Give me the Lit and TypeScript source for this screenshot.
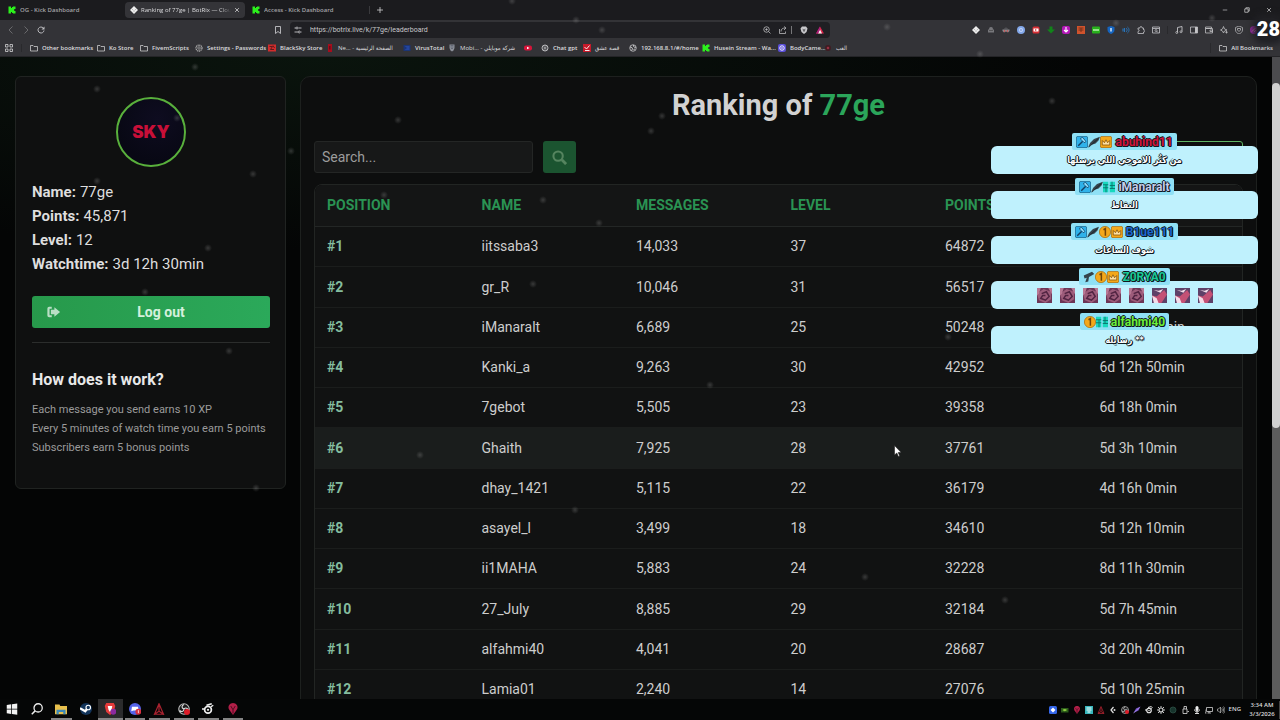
import { LitElement, html, css, svg, nothing, TemplateResult } from "lit";
import { customElement, property } from "lit/decorators.js";
import { classMap } from "lit/directives/class-map.js";

const glyphs: Record<string, TemplateResult> = {
  kick: svg`<path fill="#2cf01c" d="M1 1h5v3h2V2h2V1h5v5h-2v1h-1v2h1v1h2v5h-5v-1H8v-2H6v3H1z"/>`,
  botrix: svg`<path fill="#eee" d="M8 0l4 4 4 4-4 4-4 4-4-4-4-4 4-4z"/><path d="M5 6v2M11 6v2M6 10h4" stroke="#888" fill="none"/>`,
  close: svg`<path d="M3 3l10 10M13 3L3 13" stroke="currentColor" stroke-width="2" fill="none"/>`,
  plus: svg`<path d="M8 2v12M2 8h12" stroke="currentColor" stroke-width="1.5" fill="none"/>`,
  min: svg`<path d="M2 8h12" stroke="currentColor" stroke-width="1.6" fill="none"/>`,
  restore: svg`<path d="M2 5h9v9H2zM5 5V2h9v9h-3" stroke="currentColor" stroke-width="1.8" fill="none"/>`,
  back: svg`<path d="M11 1L4 8l7 7" stroke="#77777a" stroke-width="1.6" fill="none"/>`,
  fwd: svg`<path d="M5 1l7 7-7 7" stroke="#77777a" stroke-width="1.6" fill="none"/>`,
  reload: svg`<path d="M14 9a6 6 0 1 1-1.500-5" stroke="currentColor" stroke-width="1.900" fill="none"/><path d="M15 1v6H9z" fill="currentColor"/>`,
  mark: svg`<path d="M3 1h10v14l-5-4-5 4z" stroke="currentColor" stroke-width="1.800" fill="none"/>`,
  tune: svg`<path d="M1 4h3M9 4h6M1 12h7M13 12h2" stroke="currentColor" stroke-width="1.800"/><circle cx="6" cy="4" r="2" stroke="currentColor" stroke-width="1.600" fill="none"/><circle cx="10.500" cy="12" r="2" stroke="currentColor" stroke-width="1.600" fill="none"/>`,
  zoom: svg`<circle cx="7" cy="7" r="5.500" stroke="currentColor" stroke-width="1.500" fill="none"/><path d="M11 11l4 4M4.500 7h5M7 4.500v5" stroke="currentColor" stroke-width="1.500"/>`,
  share: svg`<path d="M1 6v9h12v-4M4 11c0-5 3-7 9-7M10 1l4 3-4 4" stroke="currentColor" stroke-width="1.500" fill="none"/>`,
  brave: svg`<path d="M4 1h8l3 4-2 7-5 4-5-4-2-7z" fill="#c9c9cc"/><path d="M5 5l3 2 3-2-1 5-2 2-2-2z" fill="#66666a"/>`,
  bat: svg`<path d="M8 1l8 14H0z" fill="#d8224a"/><path d="M8 7l4 8H4z" fill="#f5f5f5"/><path d="M0 15L8 1v6l-4 8z" fill="#a82080"/>`,
  apps: svg`<path d="M1 1h5v5H1zM10 1h5v5h-5zM1 10h5v5H1zM10 10h5v5h-5z" stroke="currentColor" stroke-width="1.500" fill="none"/>`,
  folder: svg`<path d="M1 3h5l2 2h7v9H1z" stroke="currentColor" stroke-width="1.400" fill="none"/>`,
  gear: svg`<circle cx="8" cy="8" r="6" stroke="#aaa" stroke-width="2.500" stroke-dasharray="2.500 1" fill="none"/><circle cx="8" cy="8" r="2.500" stroke="#aaa" stroke-width="1.500" fill="none"/>`,
  blacksky: svg`<path d="M0 1h16v14H0z" fill="#d22c2c"/><path d="M3 5h6L5 11h7M10 3l3 5" stroke="#3a1416" stroke-width="1.500" fill="none"/>`,
  redbox: svg`<path d="M4 0h8v16H4z" fill="#a50d1c"/><path d="M6 4h3v7H6z" fill="#700814"/>`,
  vt: svg`<path d="M1 2h14v12H1z" fill="#1b3576"/><path d="M3 4l5 4-5 4h10V4z" fill="#24459c"/>`,
  crest: svg`<path d="M3 1h10v7l-2 5-3 2-3-2-2-5z" fill="#8c9099"/><path d="M5 3h6M5 6h6M6 9h4" stroke="#3d4350"/>`,
  yt: svg`<rect x="0" y="3" width="16" height="10" rx="4" fill="#d8143a"/><path d="M6 5.500v5l5-2.500z" fill="#fff"/>`,
  gpt: svg`<circle cx="8" cy="8" r="6" stroke="#b9b9bc" stroke-width="2" fill="none"/><path d="M4 5l8 6M12 5l-8 6M8 2v12" stroke="#b9b9bc" stroke-width="1.200"/>`,
  check: svg`<path d="M0 0h16v16H0z" fill="#c61a2a"/><path d="M3 6l4 4 6-7M4 13h9" stroke="#fff" stroke-width="1.800" fill="none"/>`,
  globe: svg`<circle cx="8" cy="8" r="6.500" stroke="#c9c9cc" stroke-width="1.600" fill="none"/><path d="M2 6l4 1 1 3-2 3M9 2v3l3 2 2-1M9 11l3-1" stroke="#c9c9cc" stroke-width="1.800" fill="none"/>`,
  body: svg`<rect width="16" height="16" rx="4" fill="#5a4fd8"/><circle cx="8" cy="8" r="4.500" stroke="#fff" stroke-width="1.800" fill="none"/><circle cx="8" cy="8" r="1.500" fill="#fff"/>`,
  dark: svg`<circle cx="8" cy="8" r="6" fill="#3f1c22"/><path d="M5 8l3-3 3 3-3 3z" fill="#a33346"/>`,
  robot: svg`<path d="M2 7h12v6H2zM7 3h2v4H7z" fill="#77777b"/><circle cx="8" cy="6" r="4" fill="#77777b"/><path d="M5 9h2M9 9h2" stroke="#333" stroke-width="2"/>`,
  mask: svg`<path d="M1 7h14v3l-3 3-4-2-4 2-3-3z" fill="#8b8b8f"/><path d="M4 6c1-4 7-4 8 0z" fill="#505055"/><circle cx="5" cy="10" r="1.500" fill="#d44"/><circle cx="11" cy="10" r="1.500" fill="#d44"/>`,
  disc: svg`<circle cx="8" cy="8" r="8" fill="#83a8ea"/><circle cx="8" cy="8" r="4" fill="#c3d6fa"/><circle cx="8" cy="8" r="1.500" fill="#5675c0"/>`,
  redsq: svg`<rect x="1" y="1" width="14" height="14" rx="3" fill="#d82e34"/><path d="M3 5h10v6H3z" fill="#fff"/><path d="M6 6v4l4-2z" fill="#d82e34"/>`,
  down: svg`<path d="M5 1h6v6h5l-8 8-8-8h5z" fill="#12831a"/>`,
  purple: svg`<rect width="16" height="16" rx="4" fill="#b418b8"/><path d="M8 2v10M4 8l4 4 4-4" stroke="#fff" stroke-width="2.200" fill="none"/>`,
  orange: svg`<path d="M0 0h16v16H0z" fill="#d0532c"/><path d="M3 4h10M3 8h10M8 4v8" stroke="#6e2c1a" stroke-width="1.800"/>`,
  green: svg`<rect y="1" width="16" height="14" rx="2" fill="#28b01c"/><path d="M2 8h12M4 6v4M8 6v4M12 6v4" stroke="#d9ffd0" stroke-width="1.500"/>`,
  shieldb: svg`<path d="M8 0l7 2v6c0 4-4 7-7 8-3-1-7-4-7-8V2z" fill="#1565c0"/><path d="M8 4v7" stroke="#fff" stroke-width="2.500"/>`,
  sound: svg`<path d="M2 5v6M5 4v8" stroke="#2873b8" stroke-width="2.200"/><path d="M8 4c3 2 3 6 0 8M11 2c4 3 4 9 0 12" stroke="#2873b8" stroke-width="1.800" fill="none"/>`,
  puzzle: svg`<path d="M2 4h4c-1-4 5-4 4 0h3v4c4-1 4 4 0 4v3H2v-4c3 0 3-4 0-4z" stroke="currentColor" stroke-width="1.600" fill="none"/>`,
  inspect: svg`<path d="M1 2h14v12H1zM1 5h14" stroke="currentColor" stroke-width="1.600" fill="none"/><circle cx="8" cy="9" r="2" stroke="currentColor" stroke-width="1.400" fill="none"/><path d="M9 10l3 3" stroke="currentColor" stroke-width="1.400"/>`,
  music: svg`<path d="M5 13V3l9-2v10" stroke="currentColor" stroke-width="1.800" fill="none"/><circle cx="3.500" cy="13" r="2" stroke="currentColor" stroke-width="1.500" fill="none"/><circle cx="12" cy="11.500" r="2" stroke="currentColor" stroke-width="1.500" fill="none"/>`,
  panel: svg`<path d="M1 2h14v12H1z" stroke="currentColor" stroke-width="1.600" fill="none"/><path d="M10 2h5v12h-5z" fill="currentColor"/>`,
  wallet: svg`<path d="M1 2h12v3H1zM1 5h14v9H1zM10 8h5v3h-5z" stroke="currentColor" stroke-width="1.500" fill="none"/>`,
  spark: svg`<path d="M7 1l2 5 5 2-5 2-2 4-2-4-4-2 4-2z" stroke="currentColor" stroke-width="1.500" fill="none"/><path d="M13 10v5M10.500 12.500h5" stroke="currentColor" stroke-width="1.500"/>`,
  shield: svg`<path d="M8 0l7 3v5c0 4-4 7-7 8-3-1-7-4-7-8V3z" stroke="currentColor" stroke-width="1.400" fill="none"/><path d="M5 5h6v3l-3 3-3-3z" stroke="currentColor" stroke-width="1.500" fill="none"/>`,
  profile: svg`<circle cx="8" cy="8" r="8" fill="#9a2aa8"/><path d="M4 11l7-7M8 12l4-4" stroke="#f090c8" stroke-width="2"/>`,
  exit: svg`<path d="M6 2H3a2 2 0 0 0-2 2v8a2 2 0 0 0 2 2h3v-2.200H3.500V4.200H6z" fill="currentColor"/><path d="M9 2.500l6.500 5.500L9 13.500V10.500H5v-5h4z" fill="currentColor"/>`,
  search: svg`<circle cx="6.500" cy="6.500" r="5" stroke="currentColor" stroke-width="2.200" fill="none"/><path d="M10.500 10.500l4.500 4.500" stroke="currentColor" stroke-width="3"/>`,
  hammer: svg`<rect x=".5" y=".5" width="15" height="15" rx="2" fill="#2fb2ea" stroke="#145e86"/><path d="M3 13l6-6" stroke="#123f63" stroke-width="2"/><path d="M6 3l3-1 4 5-1 2-2-1-4-4z" fill="#8fe0ff" stroke="#123f63"/>`,
  feather: svg`<path d="M0 15l3-6 5-5 8-3-2 5-4 4-6 2z" fill="#35434b"/><path d="M1 15L14 3" stroke="#11191d" fill="none"/>`,
  crown: svg`<rect x=".5" y=".5" width="15" height="15" rx="2" fill="#f4a81a" stroke="#ad6a08"/><path d="M3 12V6l3 3 2-4 2 4 3-3v6z" fill="#ffe0a0" stroke="#7d4d0a"/>`,
  gifts: svg`<path d="M0 1h7v14H0zM9 1h7v14H9z" fill="#18d8be"/><path d="M4 5v10M0 5h7M0 9h7M12 1v9M9 6h7M9 10h7" stroke="#08756b" stroke-width="1.200"/>`,
  coin: svg`<circle cx="8" cy="8" r="7.500" fill="#f3a81b" stroke="#b06d08"/><path d="M6 5l2.500-1.500V13" stroke="#704408" stroke-width="2" fill="none"/>`,
  gun: svg`<path d="M1 6l11-5 3 3-7 4-1 6-4 1 2-6-3 1z" fill="#34434b"/>`,
  win: svg`<path d="M1 2.500l6-.8v6H1zM8 1.600l7-1v7.100H8zM1 8.500h6v6l-6-.8zM8 8.500h7v7l-7-1z" fill="#f2f2f2"/>`,
  find: svg`<circle cx="9.500" cy="6.500" r="5.500" stroke="#eee" stroke-width="1.700" fill="none"/><path d="M5.500 10.500L1 15" stroke="#eee" stroke-width="1.900"/>`,
  files: svg`<path d="M0 2h6l1 2h9v11H0z" fill="#e8c04c"/><path d="M2 9h12v6h-3v-3H5v3H2z" fill="#3b88b8"/>`,
  steam: svg`<circle cx="8" cy="8" r="8" fill="#12345a"/><path d="M0 7l7 4 4-5" stroke="#fff" stroke-width="3" fill="none"/><circle cx="11" cy="6" r="3" stroke="#fff" stroke-width="1.500" fill="#12345a"/>`,
  bravec: svg`<path d="M3 0h10l2 4-2 8-5 4-5-4-2-8z" fill="#e53b3b"/><path d="M5 4h6l-1 5-2 3-2-3z" fill="#fff"/><circle cx="12.500" cy="11.500" r="4" fill="#8c2aa0"/>`,
  discord: svg`<circle cx="8" cy="8" r="8" fill="#5563e8"/><path d="M4 5h8l1 6-3-1H6l-3 1z" fill="#fff"/><circle cx="12.500" cy="11.500" r="4" fill="#d83040"/><path d="M12.500 9.500v4" stroke="#fff"/>`,
  tri: svg`<path d="M8 1l6 14-6-4-6 4zM8 3v8M2 15h12" stroke="#a8222f" stroke-width="1.600" fill="none"/>`,
  obs: svg`<circle cx="8" cy="8" r="7" stroke="#bbb" stroke-width="1.500" fill="#1b1b1b"/><path d="M8 8c-4-1-3-5 0-6M8 8c3-3 6 0 6 3M8 8c0 4-4 4-6 2" stroke="#ddd" stroke-width="1.500" fill="none"/><circle cx="12" cy="12" r="4" fill="#dd1c28"/>`,
  series: svg`<circle cx="8" cy="9" r="4.500" stroke="#eee" stroke-width="2.300" fill="none"/><circle cx="8" cy="9" r="1.500" fill="#eee"/><path d="M0 8h4M6 3l7-2M12 5l3-2" stroke="#eee" stroke-width="2"/>`,
  pin: svg`<path d="M8 16L3 9C0 4 4 0 8 0s8 4 5 9z" fill="#b21f48"/><path d="M5 4l3 5 3-5M8 9v5" stroke="#4d0b20" stroke-width="1.300" fill="none"/>`,
  bluesq: svg`<rect width="16" height="16" rx="3" fill="#3566e8"/><path d="M8 3l5 5-5 5-5-5z" fill="#fff"/>`,
  nvidia: svg`<path d="M0 4h15v9H0z" fill="#2b5b1a"/><path d="M3 8c2-3 7-3 9 0-2 3-7 3-9 0z" fill="#8ecb40"/>`,
  teal: svg`<path d="M0 0h16v16H0z" fill="#38b8bd"/><path d="M3 4h10M3 8h10M5 12h6" stroke="#fff" stroke-width="2"/>`,
  quill: svg`<path d="M1 14L6 5l9-4-4 8z" fill="#7955c8"/><path d="M1 14L13 3" stroke="#c7b5ff"/>`,
  dots: svg`<path d="M9 2L4 8l5 6" stroke="#ddd" stroke-width="2.500" fill="none"/><circle cx="11" cy="8" r="2" fill="#ddd"/>`,
  dim: svg`<circle cx="8" cy="8" r="6" fill="#17342c" stroke="#28483e" stroke-width="2"/>`,
  cog: svg`<circle cx="8" cy="8" r="4" stroke="#ddd" stroke-width="2.200" fill="none"/><path d="M8 0v3M8 13v3M0 8h3M13 8h3M2 2l2.500 2.500M11.500 11.500L14 14M14 2l-2.500 2.500M4.500 11.500L2 14" stroke="#ddd" stroke-width="1.800"/>`,
  usb: svg`<path d="M4 6h8v9H4zM6 6V1h5v5M13 11h3" stroke="#ddd" stroke-width="1.600" fill="none"/>`,
  mic: svg`<rect x="5" y="0" width="6" height="10" rx="3" fill="#eee"/><path d="M3 7c0 6 10 6 10 0M8 11v4M4 15h8" stroke="#eee" stroke-width="1.800" fill="none"/>`,
  net: svg`<path d="M3 3h12v8H3zM8 11v3M5 14h7M0 7v7h3" stroke="#ddd" stroke-width="1.500" fill="none"/>`,
  vol: svg`<path d="M1 6h2l4-4v12l-4-4H1z" stroke="#ccc" stroke-width="1.300" fill="none"/><path d="M9 5c2 2 2 4 0 6M11 3c3 3 3 7 0 10M13 1c4 4 4 10 0 14" stroke="#ccc" stroke-width="1.200" fill="none"/>`,
  rose: svg`<path fill="#6d3656" d="M0 0h16v16H0z"/><path d="M0 6l7-5 8 3v8l-6 4-7-3z" fill="#9d5c7a"/><path d="M0 0h4l-2 6-2 2zM12 0h4v7z" fill="#b87894"/><path d="M5 6l5-2 3 5-4 4-5-2 2-3h3" fill="none" stroke="#512442" stroke-width="1.600"/>`,
  rose2: svg`<path fill="#5e4168" d="M0 0h16v16H0z"/><path d="M0 8l5 1 8-7 3 5-6 9H3z" fill="#c45175"/><path d="M0 8l5 3 2 5H2zM2 2l5 1 5-2-3 4z" fill="#f4dce8"/>`,
};

const icon = (name: string) =>
  html`<svg class="i" viewBox="0 0 16 16" aria-hidden="true">${glyphs[name]}</svg>`;

const bookmarks: [string, string][] = [
  ["folder", "Other bookmarks"], ["folder", "Ko Store"], ["folder", "FivemScripts"],
  ["gear", "Settings - Passwords"], ["blacksky", "BlackSky Store"],
  ["redbox", "Ne... - الصفحة الرئيسية"], ["vt", "VirusTotal"],
  ["crest", "Mobi... - شركة موبايلي"], ["yt", ""], ["gpt", "Chat gpt"],
  ["check", "قصة عشق"], ["globe", "192.168.8.1/#/home"],
  ["kick", "Husein Stream - Wa..."], ["body", "BodyCame..."], ["dark", "العب"],
];
const extensions = ["botrix", "robot", "mask", "disc", "redsq", "down", "purple", "orange", "green", "shieldb", "sound", "puzzle", "inspect"];
const tools = ["music", "panel", "wallet", "spark", "shield", "profile"];

const rows = [
  ["iitssaba3", "14,033", "37", "64872", "9d 4h 25min"],
  ["gr_R", "10,046", "31", "56517", "8d 6h 5min"],
  ["iManaralt", "6,689", "25", "50248", "7d 12h 10min"],
  ["Kanki_a", "9,263", "30", "42952", "6d 12h 50min"],
  ["7gebot", "5,505", "23", "39358", "6d 18h 0min"],
  ["Ghaith", "7,925", "28", "37761", "5d 3h 10min"],
  ["dhay_1421", "5,115", "22", "36179", "4d 16h 0min"],
  ["asayel_l", "3,499", "18", "34610", "5d 12h 10min"],
  ["ii1MAHA", "5,883", "24", "32228", "8d 11h 30min"],
  ["27_July", "8,885", "29", "32184", "5d 7h 45min"],
  ["alfahmi40", "4,041", "20", "28687", "3d 20h 40min"],
  ["Lamia01", "2,240", "14", "27076", "5d 10h 25min"],
];

const flakes = [
  [97, 89], [195, 67], [291, 151], [253, 174], [97, 181], [177, 118], [208, 248], [145, 292], [229, 351],
  [398, 120], [662, 116], [651, 131], [543, 200], [599, 223], [384, 195], [533, 284], [1052, 101],
  [512, 1], [576, 20], [602, 30], [887, 27], [980, 54], [1116, 23], [1212, 18], [575, 510],
  [948, 337], [865, 577], [1005, 600], [420, 455], [710, 385], [256, 488],
];

const base = css`
  * { box-sizing: border-box; }
  .i { width: 8px; height: 8px; flex: none; display: block; }
  button { font: inherit; color: inherit; background: none; border: 0; padding: 0; }
  a { color: inherit; text-decoration: none; }
`;

@customElement("browser-chrome")
class BrowserChrome extends LitElement {
  static styles = [base, css`
    :host { display: block; position: relative; flex: none; color: #dcdcde; font: 600 6px/10px "Open Sans", "DejaVu Sans Condensed", "DejaVu Sans", sans-serif; }
    .tabs { height: 20px; background: #1b1b1e; display: flex; align-items: center; gap: 2px; padding-left: 3px; }
    .tab { width: 120px; height: 16px; display: flex; align-items: center; gap: 4px; padding: 0 5px; border-radius: 4px; color: #a3a3a6; }
    .tab.on { background: #343438; color: #dcdcde; gap: 3px; }
    .label { flex: 1; overflow: hidden; white-space: nowrap; text-align: left; }
    .on .label { font-weight: 400; mask-image: linear-gradient(90deg, #000 88%, transparent); }
    .x .i, .win .i { width: 6px; height: 6px; }
    .new { border-left: 1px solid #3a3a3d; padding-left: 6px; }
    .win { margin-left: auto; display: flex; gap: 16px; padding-right: 8px; }
    .bar { height: 20px; background: #333337; display: flex; align-items: center; color: #c3c3c6; }
    .nav { display: flex; gap: 7px; padding-left: 7px; width: 274px; }
    .save { margin-right: 8px; }
    .addr { flex: 0 1 540px; height: 16px; border-radius: 4px; background: #1f1f23; display: flex; align-items: center; gap: 8px; padding: 0 6px 0 4px; }
    .url { flex: 1; min-width: 0; border: 0; padding: 0; background: none; color: #c8c8ca; font: 400 7px/10px Roboto, sans-serif; }
    .stop { border-left: 1px solid #77777a; height: 8px; margin-left: -4px; }
    .exts { flex: 1; display: flex; justify-content: flex-end; gap: 7px; padding-right: 22px; }
    .split { border-left: 1px solid #29292c; }
    .marks { height: 17px; background: #333337; border-bottom: 1px solid #242427; display: grid; align-items: center; padding: 0 7px 0 5px;
      grid-template-columns: 25px 67px 43px 55px 73px 58px 77px 45px 76px 17px 42px 46px 73px 76px 46px 1fr auto; }
    .mk { display: flex; align-items: center; gap: 4px; white-space: nowrap; }
    .arabic { font-weight: 400; }
    .apps { border-right: 1px solid #29292c; width: 17px; }
    .all { grid-column: 17; border-left: 1px solid #29292c; padding-left: 8px; }
    .count { position: absolute; right: 0; top: 18px; font: 900 20px/22px Roboto, sans-serif; color: #fff; background: #202024; border-radius: 6px; box-shadow: 0 0 6px 4px #202024; }
  `];
  render() {
    return html`
      <div class="tabs">
        <button class="tab">${icon("kick")}<span class="label">OG - Kick Dashboard</span></button>
        <button class="tab on">${icon("botrix")}<span class="label">Ranking of 77ge | BotRix — Clou</span><span class="x">${icon("close")}</span></button>
        <button class="tab">${icon("kick")}<span class="label">Access - Kick Dashboard</span></button>
        <button class="new" aria-label="New tab">${icon("plus")}</button>
        <div class="win">
          <button aria-label="Minimize">${icon("min")}</button>
          <button aria-label="Restore">${icon("restore")}</button>
          <button aria-label="Close">${icon("close")}</button>
        </div>
      </div>
      <div class="bar">
        <div class="nav">
          <button aria-label="Back">${icon("back")}</button>
          <button aria-label="Forward">${icon("fwd")}</button>
          <button aria-label="Reload">${icon("reload")}</button>
        </div>
        <button class="save" aria-label="Bookmark">${icon("mark")}</button>
        <div class="addr">
          ${icon("tune")}
          <input class="url" aria-label="Address" value="https://botrix.live/k/77ge/leaderboard" />
          ${icon("zoom")}${icon("share")}<span class="stop"></span>${icon("brave")}${icon("bat")}
        </div>
        <div class="exts">
          ${extensions.map(icon)}<span class="split"></span>${tools.map(icon)}
        </div>
      </div>
      <nav class="marks">
        <span class="apps">${icon("apps")}</span>
        ${bookmarks.map(([g, t]) => html`<a class="mk ${classMap({ arabic: /[\u0600-\u06ff]/.test(t) })}" href="#">${icon(g)}${t ? html`<span>${t}</span>` : nothing}</a>`)}
        <a class="mk all" href="#">${icon("folder")}<span>All Bookmarks</span></a>
      </nav>
      <div class="count">28</div>`;
  }
}

@customElement("profile-card")
class ProfileCard extends LitElement {
  static styles = [base, css`
    :host { display: block; border: 1px solid #202321; border-radius: 6px; background: #0f1010; padding: 20px 15px 31px 16px; color: #dedede; font: 15px/24px Roboto, sans-serif; }
    .avatar { width: 70px; height: 70px; margin: 0 auto 13px; border: 2px solid #59b03c; border-radius: 50%; background: radial-gradient(circle at 60% 30%, #0e0c20, #080814 70%); display: grid; place-items: center; color: #c80f38; font: 900 17px/18px Inter, sans-serif; }
    .facts { margin: 0; }
    .fact { display: flex; gap: 4px; }
    dt { font-weight: 700; }
    dd { margin: 0; }
    .out { width: 100%; height: 32px; margin-top: 20px; border-radius: 3px; background: linear-gradient(90deg, #27994b, #2ba95a); color: #d5f0dd; font: 700 14px/20px Roboto, sans-serif; display: flex; align-items: center; padding: 0 14px; }
    .out .i { width: 15px; height: 14px; color: #b9dfc5; }
    .word { flex: 1; padding-left: 5px; text-align: center; }
    hr { border: 0; border-top: 1px solid #2b2d2c; margin: 14px 0 25px; }
    h2 { font: 700 16px/24px Roboto, sans-serif; margin: 0 0 8px; color: #e8e8e8; }
    ul { list-style: none; margin: 0; padding: 0; font-size: 11px; line-height: 19px; color: #9b9b9b; white-space: nowrap; }
  `];
  render() {
    const facts = [["Name:", "77ge"], ["Points:", "45,871"], ["Level:", "12"], ["Watchtime:", "3d 12h 30min"]];
    return html`
      <div class="avatar">SKY</div>
      <dl class="facts">${facts.map(([k, v]) => html`<div class="fact"><dt>${k}</dt><dd>${v}</dd></div>`)}</dl>
      <button class="out">${icon("exit")}<span class="word">Log out</span></button>
      <hr />
      <h2>How does it work?</h2>
      <ul>
        <li>Each message you send earns 10 XP</li>
        <li>Every 5 minutes of watch time you earn 5 points</li>
        <li>Subscribers earn 5 bonus points</li>
      </ul>`;
  }
}

@customElement("ranking-panel")
class RankingPanel extends LitElement {
  static styles = [base, css`
    :host { display: block; border: 1px solid #1d201e; border-radius: 10px; background: #0d0e0e; padding: 8px 13px; color: #cdcdcd; font: 14px/20px Roboto, sans-serif; }
    h1 { margin: 0 0 16px; text-align: center; font: 700 29px/40px Roboto, sans-serif; color: #d2d2d2; }
    .hl { color: #2ba55a; }
    form { display: flex; gap: 10px; height: 32px; margin-bottom: 11px; }
    .q { width: 219px; border: 1px solid #242625; border-radius: 3px; background: #171818; color: #ccc; padding: 0 7px; font: 14px/20px Roboto, sans-serif; }
    .q::placeholder { color: #9c9c9c; }
    .go { width: 33px; border-radius: 3px; background: #1b5430; color: #55845f; display: grid; place-items: center; }
    .go .i { width: 15px; height: 15px; }
    .opt { width: 84px; margin-left: auto; border: 1px solid #5fb463; border-radius: 3px; }
    .frame { border: 1px solid #222523; border-radius: 8px; overflow: hidden; }
    table { width: 100%; table-layout: fixed; border-collapse: collapse; background: #111212; }
    th, td { text-align: left; padding: 0 12px; height: 40px; border-bottom: 1px solid #1b1d1c; white-space: nowrap; }
    th { height: 41px; color: #2a9353; font-weight: 700; background: #141515; border-color: #232625; }
    tr:nth-child(4n + 2) td { height: 41px; }
    .pos { color: #84bd9f; font-weight: 700; }
    .hover { background: #1a1d1c; }
  `];
  render() {
    return html`
      <h1>Ranking of <span class="hl">77ge</span></h1>
      <form @submit=${(e: Event) => e.preventDefault()}>
        <input class="q" type="search" aria-label="Search" placeholder="Search..." />
        <button class="go" aria-label="Search">${icon("search")}</button>
        <button class="opt" type="button" aria-label="Options"></button>
      </form>
      <div class="frame"><table>
        <thead><tr>${["POSITION", "NAME", "MESSAGES", "LEVEL", "POINTS", "WATCHTIME"].map(h => html`<th>${h}</th>`)}</tr></thead>
        <tbody>${rows.map((r, i) => html`
          <tr class=${classMap({ hover: i === 5 })}><td class="pos">#${i + 1}</td>${r.map(c => html`<td>${c}</td>`)}</tr>`)}
        </tbody>
      </table></div>`;
  }
}

@customElement("chat-line")
class ChatLine extends LitElement {
  @property() name = "";
  @property() tone = "";
  @property() text = "";
  @property({ attribute: false }) badges: string[] = [];
  @property({ attribute: false }) emotes: string[] = [];
  static styles = [base, css`
    :host { display: flex; flex-direction: column; align-items: center; }
    .tag { position: relative; z-index: 1; display: flex; align-items: center; height: 17px; padding: 0 4px; border-radius: 2px; background: #8fe0f5; margin-bottom: -4px; }
    .tag .i { width: 12px; height: 12px; }
    .who { margin-left: 3px; font: 700 12px/14px Roboto, sans-serif; }
    .who, .msg { text-shadow: 1px 0 #101820, -1px 0 #101820, 0 1px #101820, 0 -1px #101820, 1px 1px #101820; }
    .red { color: #d2143c; } .grey { color: #c4cdea; } .blue { color: #1b68cf; } .teal { color: #19c996; } .lime { color: #6cf03a; }
    .msg { width: 100%; height: 28px; border-radius: 6px; background: #bff1fd; display: flex; justify-content: center; align-items: center; gap: 8px; color: #fff; font: 700 9px/10px "DejaVu Sans Condensed", "DejaVu Sans", sans-serif; }
    .msg .i { width: 15px; height: 15px; }
  `];
  render() {
    return html`
      <div class="tag">${this.badges.map(icon)}<span class="who ${this.tone}">${this.name}</span></div>
      <div class="msg" dir="rtl">${this.text ? html`<span>${this.text}</span>` : this.emotes.map(icon)}</div>`;
  }
}

@customElement("task-bar")
class TaskBar extends LitElement {
  static styles = [base, css`
    :host { display: flex; align-items: stretch; height: 21px; flex: none; background: #050606; color: #ddd; font: 600 6px/9px "Open Sans", sans-serif; }
    .apps { display: grid; grid-template-columns: repeat(10, 1fr); width: 245px; }
    .app { display: grid; place-items: center; margin: 0 2px; border-bottom: 2px solid transparent; }
    .app .i { width: 12px; height: 12px; }
    .run { border-bottom-color: #858585; }
    .on { background: #2b2b2c; margin: 0; }
    .tray { margin-left: auto; display: flex; align-items: center; gap: 4px; }
    .clock { text-align: center; width: 35px; border-right: 1px solid #444; }
  `];
  render() {
    const apps = ["win", "find", "files", "steam", "bravec", "discord", "tri", "obs", "series", "pin"];
    const tray = ["bluesq", "nvidia", "pin", "teal", "tri", "dots", "obs", "quill", "series", "cog", "dim", "usb", "mic", "net", "vol"];
    return html`
      <div class="apps">${apps.map((a, i) => html`<button aria-label=${a} class="app ${classMap({ run: i === 2 || i > 3, on: i === 4 })}">${icon(a)}</button>`)}</div>
      <div class="tray">${tray.map(icon)}<span>ENG</span><div class="clock">3:34 AM<br />3/3/2026</div></div>`;
  }
}

@customElement("app-root")
class AppRoot extends LitElement {
  static styles = [base, css`
    :host { display: flex; flex-direction: column; height: 100vh; position: relative; overflow: hidden; background: #040505; }
    .view { flex: 1; min-height: 0; display: flex; overflow: hidden; background: radial-gradient(ellipse 60% 30% at 25% 0, #0a140d, #040505); }
    .page { flex: 1; min-width: 0; overflow: hidden; display: grid; grid-template-columns: 271px minmax(0, 1fr); align-items: start; gap: 14px; padding: 19px 15px 0; }
    .scroll { width: 8px; background: linear-gradient(#4b4b4e 30%, #5c5c5c 40%); padding-top: 26px; }
    .thumb { height: 56%; border-radius: 4px; background: #d0d0d0; }
    .chat { position: absolute; z-index: 2; top: 133px; right: 22px; width: 267px; display: flex; flex-direction: column; gap: 4px; }
    .snow { position: absolute; inset: 0; width: 100%; height: 100%; pointer-events: none; }
    .cursor { position: absolute; left: 894px; top: 445px; width: 8px; height: 12px; }
  `];
  render() {
    return html`
      <browser-chrome></browser-chrome>
      <div class="view">
        <main class="page"><profile-card></profile-card><ranking-panel></ranking-panel></main>
        <div class="scroll"><div class="thumb"></div></div>
      </div>
      <task-bar></task-bar>
      <svg class="snow" aria-hidden="true">
        <defs><radialGradient id="f"><stop offset="0" stop-color="#aaa" stop-opacity=".26"/><stop offset="1" stop-color="#aaa" stop-opacity="0"/></radialGradient></defs>
        ${flakes.map(([x, y]) => svg`<circle cx=${x} cy=${y} r="4" fill="url(#f)"/>`)}
      </svg>
      <section class="chat" aria-label="Chat">
        <chat-line name="abuhind11" tone="red" .badges=${["hammer", "feather", "crown"]} text="من كثُر الاموجي اللي يرسلها"></chat-line>
        <chat-line name="iManaralt" tone="grey" .badges=${["hammer", "feather", "gifts"]} text="النقاط"></chat-line>
        <chat-line name="B1ue111" tone="blue" .badges=${["hammer", "feather", "coin", "crown"]} text="شوف الساعات"></chat-line>
        <chat-line name="Z0RYA0" tone="teal" .badges=${["gun", "coin", "crown"]} .emotes=${["rose2", "rose2", "rose2", "rose", "rose", "rose", "rose", "rose"]}></chat-line>
        <chat-line name="alfahmi40" tone="lime" .badges=${["coin", "gifts"]} text="** رسايله"></chat-line>
      </section>
      <svg class="cursor" viewBox="0 0 8 12" aria-hidden="true"><path d="M.5 .5v9.500l2.300-2 1.600 3.500 1.300-.6-1.500-3.400h3z" fill="#fff" stroke="#222" stroke-width=".6"/></svg>`;
  }
}
